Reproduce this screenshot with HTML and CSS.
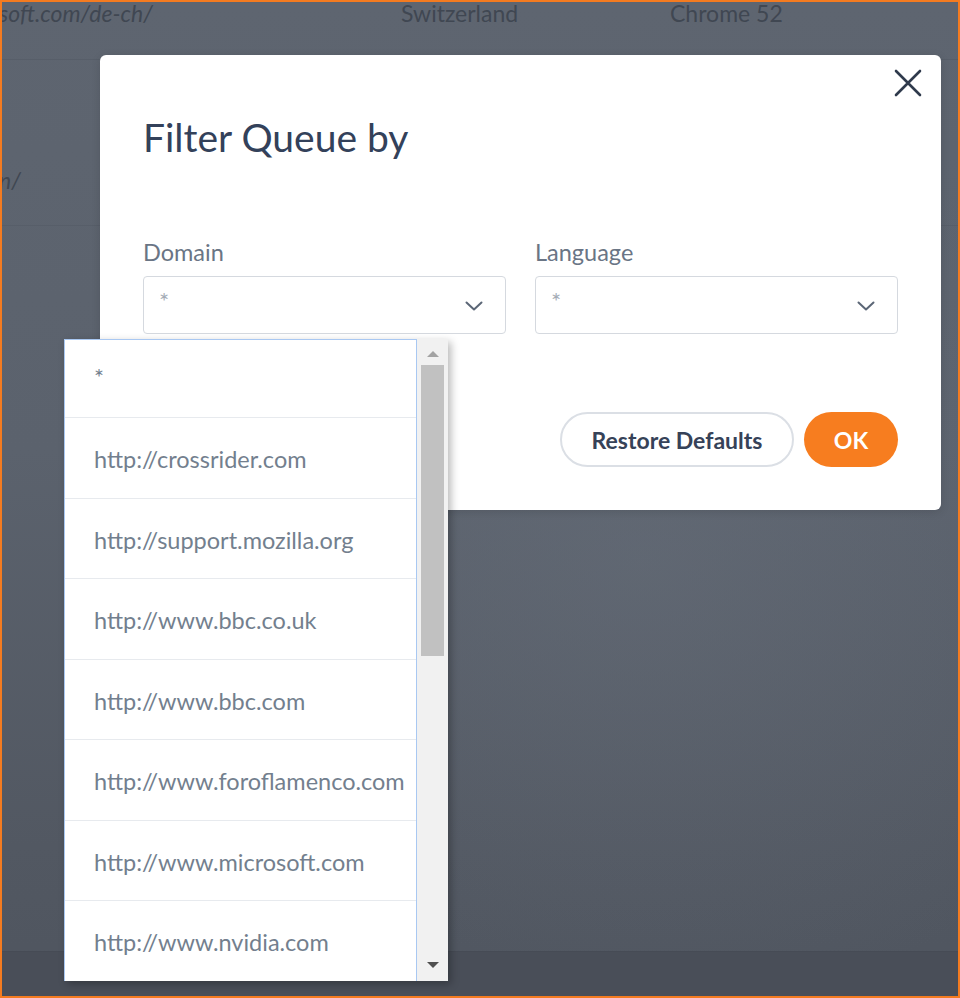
FILE: index.html
```html
<!DOCTYPE html>
<html lang="en">
<head>
<meta charset="utf-8">
<title>Filter Queue by</title>
<link rel="stylesheet" href="styles.css">
</head>
<body>
<div class="frame">
  <div class="bg-page">
    <div class="bg-row bg-row-first">
      <span class="bg-cell bg-url">soft.com/de-ch/</span>
      <span class="bg-cell bg-country">Switzerland</span>
      <span class="bg-cell bg-browser">Chrome 52</span>
    </div>
    <div class="bg-row bg-row-second">
      <span class="bg-cell bg-url bg-url-low">n/</span>
    </div>
    <div class="bg-spacer"></div>
    <div class="bg-footer"></div>
  </div>

  <div class="modal">
    <button class="close" aria-label="Close">
      <svg width="28" height="28" viewBox="0 0 28 28"><path d="M2 2 L26 26 M26 2 L2 26" stroke="#2f3a4c" stroke-width="2.6" stroke-linecap="round" fill="none"/></svg>
    </button>
    <h1 class="title">Filter Queue by</h1>
    <div class="fields">
      <div class="field">
        <label class="label">Domain</label>
        <div class="select">
          <span class="placeholder">*</span>
          <svg class="chev" width="18" height="10" viewBox="0 0 18 10"><path d="M1.5 1.5 L9 8.5 L16.5 1.5" stroke="#5b6676" stroke-width="2" fill="none" stroke-linecap="round" stroke-linejoin="round"/></svg>
        </div>
      </div>
      <div class="field">
        <label class="label">Language</label>
        <div class="select">
          <span class="placeholder">*</span>
          <svg class="chev" width="18" height="10" viewBox="0 0 18 10"><path d="M1.5 1.5 L9 8.5 L16.5 1.5" stroke="#5b6676" stroke-width="2" fill="none" stroke-linecap="round" stroke-linejoin="round"/></svg>
        </div>
      </div>
    </div>
    <div class="actions">
      <button class="btn btn-outline">Restore Defaults</button>
      <button class="btn btn-primary">OK</button>
    </div>
  </div>

  <div class="listbox">
    <ul class="options">
      <li class="opt">*</li>
      <li class="opt">http://crossrider.com</li>
      <li class="opt">http://support.mozilla.org</li>
      <li class="opt">http://www.bbc.co.uk</li>
      <li class="opt">http://www.bbc.com</li>
      <li class="opt">http://www.foroflamenco.com</li>
      <li class="opt">http://www.microsoft.com</li>
      <li class="opt">http://www.nvidia.com</li>
    </ul>
    <div class="scrollbar">
      <span class="arrow arrow-up"></span>
      <span class="thumb"></span>
      <span class="arrow arrow-down"></span>
    </div>
  </div>
</div>
</body>
</html>
```

FILE: styles.css
```css
* { box-sizing: border-box; }
html, body { margin: 0; padding: 0; }
body {
  font-family: "Lato", "Liberation Sans", sans-serif;
  background: #f47b20;
}
.frame {
  position: relative;
  width: 960px;
  height: 998px;
  border: 2px solid #f47b20;
  overflow: hidden;
  background:
    radial-gradient(ellipse 520px 460px at 640px 560px, rgba(110, 118, 130, 0.35) 0%, rgba(110, 118, 130, 0) 100%),
    linear-gradient(180deg, #5e6570 0%, #5b626d 45%, #525862 85%, #4f555f 100%);
}

/* background page (dimmed) */
.bg-page {
  display: flex;
  flex-direction: column;
  height: 100%;
}
.bg-row {
  display: grid;
  grid-template-columns: 399px 269px 1fr;
  border-bottom: 1px solid #575e69;
  font-size: 23px;
  color: #404752;
}
.bg-row-first { height: 58px; line-height: 24px; }
.bg-row-first .bg-cell { margin-top: -1px; }
.bg-row-second { height: 166px; }
.bg-url { font-style: italic; margin-left: -3px; }
.bg-url-low { padding-top: 110px; line-height: 20px; }
.bg-spacer { flex: 1; }
.bg-footer {
  height: 45px;
  background: #494e58;
  border-top: 1px solid #464b55;
}

/* modal */
.modal {
  position: absolute;
  left: 98px;
  top: 53px;
  width: 841px;
  height: 455px;
  background: #fff;
  border-radius: 6px;
  padding: 58px 43px 43px;
  box-shadow: 0 2px 10px rgba(0, 0, 0, 0.12);
}
.close {
  position: absolute;
  right: 19px;
  top: 14px;
  width: 28px;
  height: 28px;
  padding: 0;
  border: 0;
  background: none;
}
.close svg { display: block; }
.title {
  margin: 0 0 78px;
  font-size: 39px;
  line-height: 48px;
  font-weight: 400;
  color: #33415a;
}
.fields {
  display: grid;
  grid-template-columns: 363px 363px;
  gap: 29px;
}
.label {
  display: block;
  font-size: 23.5px;
  line-height: 26px;
  color: #6a7585;
  margin-bottom: 11px;
}
.select {
  height: 58px;
  border: 1px solid #d5d9df;
  border-radius: 4px;
  display: flex;
  align-items: center;
  justify-content: space-between;
  padding: 0 22px 0 15px;
}
.placeholder {
  font-size: 24px;
  line-height: 22px;
  color: #a4acb6;
  margin-top: -8px;
}
.chev { display: block; margin-top: 2px; }

.actions {
  display: flex;
  justify-content: flex-end;
  gap: 10px;
  margin-top: 78px;
}
.btn {
  height: 55px;
  border-radius: 28px;
  font-family: "Lato", "Liberation Sans", sans-serif;
  font-weight: 700;
  font-size: 23px;
  cursor: pointer;
}
.btn-outline {
  width: 234px;
  background: #fff;
  border: 2px solid #dbdfe5;
  color: #364258;
}
.btn-primary {
  width: 94px;
  background: #f77d1f;
  border: 0;
  color: #fff;
}

/* native-like dropdown */
.listbox {
  position: absolute;
  left: 62px;
  top: 337px;
  width: 384px;
  height: 642px;
  display: flex;
  background: #fff;
  box-shadow: 3px 3px 8px rgba(0, 0, 0, 0.28);
}
.options {
  flex: 1;
  margin: 0;
  padding: 0;
  list-style: none;
  overflow: hidden;
  border: 1px solid #a9c8f2;
  border-bottom: 0;
}
.opt {
  height: 80.5px;
  border-bottom: 1px solid #e7eaee;
  padding-left: 29px;
  display: flex;
  align-items: center;
  padding-top: 3px;
  font-size: 23.5px;
  color: #737f8e;
}
.opt:first-child { margin-top: -2.5px; padding-top: 0; }
.scrollbar {
  width: 31px;
  background: #f1f1f1;
  display: flex;
  flex-direction: column;
  align-items: center;
}
.thumb {
  width: 23px;
  height: 291px;
  background: #c1c1c1;
  margin-top: 8px;
}
.arrow {
  width: 0;
  height: 0;
  border-left: 6px solid transparent;
  border-right: 6px solid transparent;
}
.arrow-up {
  margin-top: 12px;
  border-bottom: 6px solid #a3a3a3;
}
.arrow-down {
  margin-top: auto;
  margin-bottom: 13px;
  border-top: 6px solid #505050;
}
```
